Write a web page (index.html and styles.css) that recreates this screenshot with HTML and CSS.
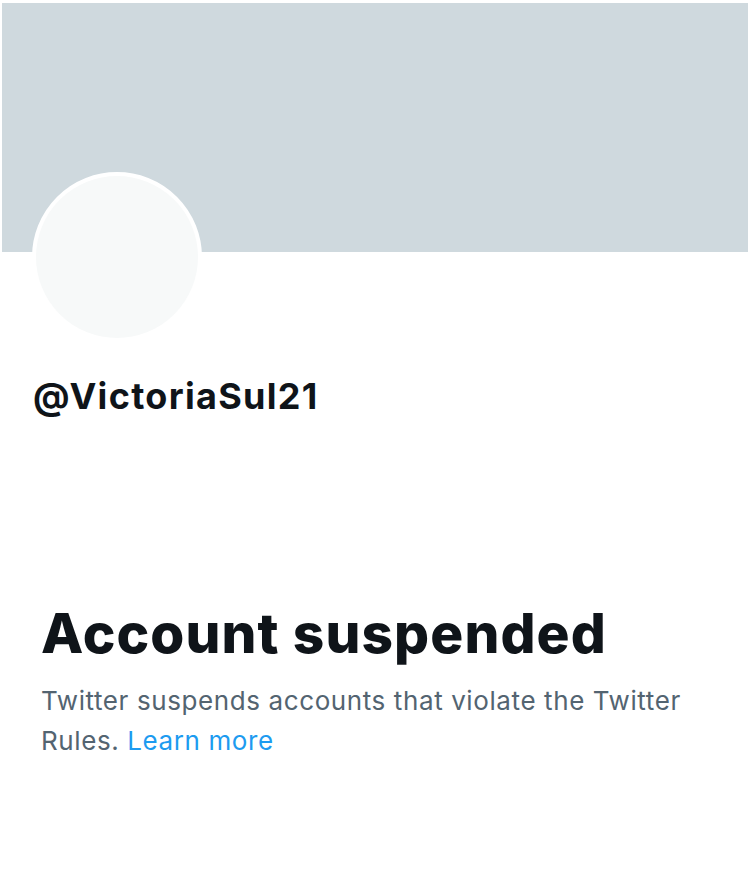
FILE: index.html
```html
<!DOCTYPE html>
<html lang="en">
<head>
<meta charset="utf-8">
<title>Account suspended</title>
<link rel="stylesheet" href="styles.css">
</head>
<body>
<div class="page">
  <div class="banner"></div>
  <div class="avatar"></div>
  <div class="handle">@VictoriaSul21</div>
  <div class="notice">
    <h1 class="title">Account suspended</h1>
    <p class="desc">Twitter suspends accounts that violate the Twitter Rules. <a class="link" href="#">Learn more</a></p>
  </div>
</div>
</body>
</html>
```
FILE: styles.css
```css
html, body {
  margin: 0;
  padding: 0;
  background: #ffffff;
}
body {
  font-family: Inter, "Liberation Sans", sans-serif;
  color: #0f1419;
}
.page {
  width: 750px;
  padding-top: 3px;
}
.banner {
  height: 249px;
  margin: 0 2px;
  background: #cfd9de;
}
.avatar {
  width: 162px;
  height: 162px;
  margin: -80px 0 0 32px;
  border: 4px solid #ffffff;
  border-radius: 50%;
  background: #f7f9f9;
  position: relative;
}
.handle {
  margin: 32px 0 0 33px;
  font-size: 36px;
  line-height: 44px;
  font-weight: 700;
  letter-spacing: 1.3px;
  color: #0f1419;
}
.notice {
  margin: 183px 0 0 41px;
  width: 680px;
}
.title {
  margin: 0;
  font-size: 55px;
  line-height: 64px;
  font-weight: 800;
  letter-spacing: 1.1px;
  color: #0f1419;
}
.desc {
  margin: 16px 0 0;
  font-size: 26px;
  line-height: 40px;
  letter-spacing: 0.6px;
  color: #536471;
}
.link {
  color: #1d9bf0;
  text-decoration: none;
}
```
